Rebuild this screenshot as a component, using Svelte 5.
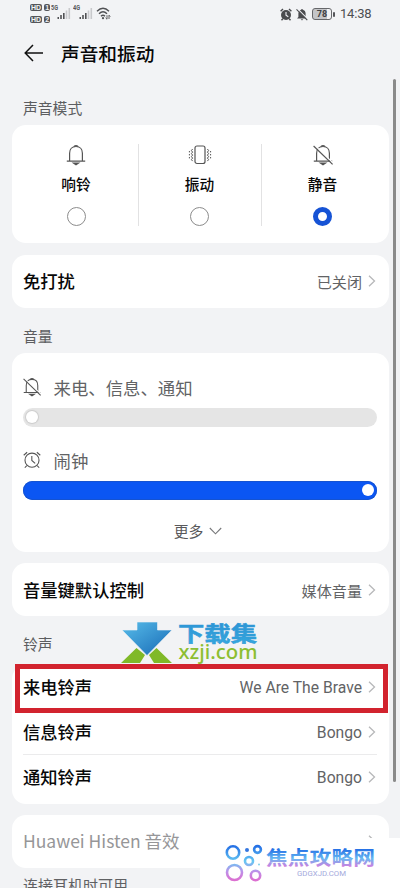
<script>
  let mode = $state('silent');

  const modes = [
    { id: 'ring', name: '响铃' },
    { id: 'vibrate', name: '振动' },
    { id: 'silent', name: '静音' }
  ];

  const volumes = [
    { id: 'silent', name: '来电、信息、通知', value: 0 },
    { id: 'alarm', name: '闹钟', value: 100 }
  ];

  const ringtones = [
    { name: '来电铃声', value: 'We Are The Brave', marked: true },
    { name: '信息铃声', value: 'Bongo' },
    { name: '通知铃声', value: 'Bongo' }
  ];
</script>

{#snippet chevron()}
  <svg class="chevron" width="8" height="12" viewBox="0 0 8 12">
    <path d="M1 .8 6.5 6 1 11.2" />
  </svg>
{/snippet}

{#snippet icon(id, size)}
  <svg class="icon" width={size} height={size} viewBox="0 0 20 20">
    {#if id === 'vibrate'}
      <rect x="5" y="1" width="10" height="17.5" rx="2" />
      <path class="waves" d="M2.6 4 1.4 5.6l1.2 1.5-1.2 1.5 1.200 1.500-1.200 1.500 1.200 1.500-1.200 1.500 1.200 1.500M17.400 4l1.200 1.600-1.200 1.500 1.200 1.500-1.200 1.500 1.200 1.500-1.200 1.500 1.200 1.500-1.200 1.500M-.6 6v1.400M-.6 9v1.400M-.6 12v1.400M20.600 6v1.400M20.600 9v1.400M20.600 12v1.400" />
    {:else if id === 'alarm'}
      <circle cx="10" cy="10.2" r="7.8" />
      <path d="M9.8 5.5v5l3.7 3.3M.8 4.7 4.6 1.4M15.4 1.4l3.8 3.3M4.2 16.2 2 18.6M15.8 16.2l2.2 2.4" />
    {:else}
      <path d="M.8 16.2h18.4M3.6 16.2V8.2C3.6 4.300 6 1.500 10 1.500s6.400 2.800 6.400 6.700v8" />
      <path d="M7.8 1.6Q10-.5 12.2 1.6" />
      <path class="clapper" d="M7.5 18h5L10 19.7z" />
      {#if id === 'silent'}
        <path class="gap" d="M1.7.3 20 18" />
        <path d="M.6 1 19.6 19.4" />
      {/if}
    {/if}
  </svg>
{/snippet}

{#snippet signal(label)}
  <svg width="21" height="15" viewBox="0 0 21 15">
    <text x="0" y="6" class="net" textLength="7" lengthAdjust="spacingAndGlyphs">{label}</text>
    <path class="dark" d="M6.500 13H8v2H6.500zM9.200 11h1.600v4H9.200zM12 9h1.600v6H12z" />
    <path class="pale" d="M14.700 6.500h1.600V15h-1.600zM17.500 4h1.600v11h-1.600z" />
  </svg>
{/snippet}

<div class="screen">
  <header class="status">
    <div class="hd">
      <span><b>HD</b><b>1</b></span>
      <span><b>HD</b><b>2</b></span>
    </div>
    {@render signal('5G')}
    {@render signal('4G')}
    <svg class="wifi" width="15" height="13" viewBox="0 0 15 13">
      <path d="M1 4.3Q7-1.7 13 4.3M3 6.8q4-4 8 0M5 9.2q2-2 4 0" />
      <circle cx="7" cy="11.2" r="1.1" />
      <path class="thin" d="M11 8.2v4l-1.4-1.4M13 12V8.2l1.3 1.4" />
    </svg>
    <div class="status-right">
      <svg width="12" height="13" viewBox="0 0 12 13">
        <circle cx="6" cy="7" r="5" fill="#4a4b4e" />
        <path d="M.6 3.3 3 1M9 1l2.4 2.3M2.8 10.8 1.5 12.3M9.2 10.8l1.3 1.5" stroke="#4a4b4e" stroke-width="1.4" />
        <path d="M6 4v3.2l2.3 1.6" fill="none" stroke="#f2f3f6" stroke-width="1.1" />
      </svg>
      <svg width="12" height="13" viewBox="0 0 12 13">
        <path d="M1 10.4 2.4 9V5Q3 2 5 1.7 6 .2 7 1.7 9.6 2.4 9.6 5v4l1.4 1.4zM4.7 11.3h2.6L6 12.5z" fill="#4a4b4e" />
        <path d="M1.3.7 12 11.4" stroke="#f2f3f6" stroke-width="1.2" />
        <path d="M.5 1.3 11.3 12.2" stroke="#4a4b4e" stroke-width="1.1" />
      </svg>
      <div class="battery"><span>78</span></div>
      <span class="clock">14:38</span>
    </div>
  </header>

  <div class="title-bar">
    <svg width="20" height="18" viewBox="0 0 20 18">
      <path d="M19 9H1.5M9 1 1.2 9 9 17" />
    </svg>
    <h1>声音和振动</h1>
  </div>

  <main>
    <h2 class="first">声音模式</h2>
    <section class="card modes">
      {#each modes as m}
        <button class="mode" onclick={() => (mode = m.id)}>
          {@render icon(m.id, 20)}
          <span class="mode-name">{m.name}</span>
          <span class="radio" class:checked={mode === m.id}></span>
        </button>
      {/each}
    </section>

    <section class="card row single">
      <span class="name">免打扰</span>
      <span class="value">已关闭</span>
      {@render chevron()}
    </section>

    <h2 class="volume-title">音量</h2>
    <section class="card volumes">
      {#each volumes as v}
        <div class="volume">
          <div class="volume-head">
            {@render icon(v.id, 18)}
            <span>{v.name}</span>
          </div>
          <div class="track" class:full={v.value === 100}>
            <span class="thumb"></span>
          </div>
        </div>
      {/each}
      <div class="more">
        <span>更多</span>
        <svg width="13" height="8" viewBox="0 0 13 8"><path d="M.8 1 6.5 6.8 12.2 1" /></svg>
      </div>
    </section>

    <section class="card row single">
      <span class="name">音量键默认控制</span>
      <span class="value">媒体音量</span>
      {@render chevron()}
    </section>

    <h2 class="ring-title">铃声</h2>
    <section class="card ringtones">
      {#each ringtones as r}
        <div class="row ringtone" class:marked={r.marked}>
          <span class="name">{r.name}</span>
          <span class="value latin">{r.value}</span>
          {@render chevron()}
        </div>
      {/each}
    </section>

    <section class="card row single disabled">
      <span class="name">Huawei Histen 音效</span>
      {@render chevron()}
    </section>
    <p class="hint">连接耳机时可用</p>
  </main>

  <div class="scrollbar"></div>

  <svg class="download-mark" width="140" height="44" viewBox="0 0 140 44">
    <defs>
      <linearGradient id="arrow" x1="0" y1="0" x2="1" y2="1">
        <stop offset="0" stop-color="#58bdea" />
        <stop offset="1" stop-color="#1769b5" />
      </linearGradient>
      <linearGradient id="word" x1="0" y1="0" x2="0" y2="1">
        <stop offset="0" stop-color="#2c8fd2" />
        <stop offset="1" stop-color="#35aadf" />
      </linearGradient>
    </defs>
    <path d="M0 43 15.5 28 24 35 19 43zM51 43 35.5 28 28 35 33 43z" fill="#80b928" />
    <path d="M16 2h20.500v8H51L26 35.500 1 10h15z" fill="url(#arrow)" stroke="#f2f3f5" stroke-width=".6" />
    <text class="mark-cn" x="57" y="20.500" textLength="79" lengthAdjust="spacingAndGlyphs" fill="url(#word)" stroke="#3199d7">下载集</text>
    <text class="mark-en" x="57.5" y="38.700" textLength="79" lengthAdjust="spacingAndGlyphs">xzji.com</text>
  </svg>

  <div class="site-mark">
    <svg width="200" height="50" viewBox="0 0 200 50">
      <defs>
        <linearGradient id="site" gradientUnits="userSpaceOnUse" x1="0" y1="8" x2="0" y2="42">
          <stop offset="0" stop-color="#246fe5" />
          <stop offset=".45" stop-color="#65c8f3" />
          <stop offset=".75" stop-color="#bc91e9" />
          <stop offset="1" stop-color="#dc70d1" />
        </linearGradient>
        <linearGradient id="site-word" gradientUnits="userSpaceOnUse" x1="0" y1="11" x2="0" y2="30">
          <stop offset="0" stop-color="#246fe5" />
          <stop offset=".5" stop-color="#68b8f2" />
          <stop offset="1" stop-color="#df75dc" />
        </linearGradient>
      </defs>
      <g fill="none" stroke="url(#site)" stroke-width="2.6">
        <circle cx="33" cy="14.5" r="6.2" />
        <circle cx="57.5" cy="11.5" r="3.4" />
        <circle cx="49" cy="23" r="4" />
        <circle cx="34.5" cy="34.5" r="7.5" />
        <circle cx="55.5" cy="37.5" r="4.7" />
      </g>
      <circle cx="47" cy="12" r="2" fill="#3577df" />
      <circle cx="59" cy="26.5" r="1" fill="#80cee9" />
      <text class="site-cn" x="66" y="27" textLength="109" lengthAdjust="spacingAndGlyphs" fill="url(#site-word)">焦点攻略网</text>
      <text class="site-en" x="97" y="37.5" textLength="49" lengthAdjust="spacingAndGlyphs">GDGXJD.COM</text>
    </svg>
  </div>
</div>

<style>
:global(body) {
  background: #f2f3f5;
}

.screen {
  position: relative;
  width: 400px;
  height: 888px;
  overflow: hidden;
  background: #f2f3f5;
  color: #080808;
  font-family: "Noto Sans CJK SC", sans-serif;
}

svg {
  display: block;
  flex: none;
}

.status {
  display: flex;
  height: 28px;
  box-sizing: border-box;
  padding: 3px 29px 0 30px;
}

.hd {
  display: flex;
  flex-direction: column;
  gap: 5px;
  width: 21px;
  padding-top: 1px;
}

.hd span {
  display: flex;
  gap: 2px;
}

.hd b {
  height: 7px;
  padding: 0 1px;
  border-radius: 2px;
  background: #55565a;
  color: #f2f3f5;
  font: bold 7px/7px "Liberation Sans", sans-serif;
}

.status > svg {
  margin-top: 1px;
  margin-right: 1px;
}

.status > .wifi {
  margin-top: 4px;
}

.net {
  overflow: visible;
  font: bold 7px Roboto, sans-serif;
  fill: #55565a;
}

.dark {
  fill: #505154;
}

.pale {
  fill: #c8c9cc;
}

.status .wifi {
  margin-left: 1px;
}

.wifi path {
  fill: none;
  stroke: #505154;
  stroke-width: 1.4;
}

.wifi circle {
  fill: #505154;
}

.wifi .thin {
  stroke-width: 0.9;
}

.status-right {
  display: flex;
  align-items: center;
  height: 22px;
  margin-left: auto;
  gap: 4px;
}

.battery {
  position: relative;
  width: 18px;
  height: 10px;
  margin-right: 4px;
  border: 1px solid #66676a;
  border-radius: 3px;
  background: linear-gradient(90deg, #c4c5c8 78%, #f2f3f5 78%);
  color: #414245;
  font: bold 9px/10px Roboto, sans-serif;
  text-align: center;
}

.battery::after {
  content: '';
  position: absolute;
  top: 3px;
  right: -4px;
  width: 2px;
  height: 5px;
  border-radius: 1px;
  background: #55565a;
}

.clock {
  width: 31px;
  color: #4d4e51;
  font: 13px/22px Roboto, sans-serif;
  letter-spacing: -0.2px;
}

.title-bar {
  display: flex;
  align-items: center;
  height: 52px;
  padding: 0 24px 2px;
  gap: 17px;
  box-sizing: border-box;
}

.title-bar path {
  fill: none;
  stroke: #111;
  stroke-width: 1.5;
}

h1 {
  margin: 0;
  font-size: 18.7px;
  font-weight: 500;
  line-height: 28px;
}

main {
  padding: 0 11px 0 12px;
}

h2 {
  margin: 0 11px;
  color: #5c5d60;
  font-size: 14.8px;
  font-weight: 400;
  line-height: 22px;
}

.first {
  padding: 17px 0 6px;
}

.card {
  border-radius: 14px;
  background: #fff;
}

.modes {
  display: grid;
  grid-template-columns: 1fr 1fr 1fr;
  height: 118px;
  box-sizing: border-box;
  padding: 19px 5px 18px 3px;
}

.mode {
  display: flex;
  flex-direction: column;
  align-items: center;
  padding: 1px 1px 0 0;
  border: 0;
  background: none;
  color: #080808;
  font-family: inherit;
}

.mode + .mode {
  border-left: 1px solid #e2e2e3;
}

.icon {
  overflow: visible;
  fill: none;
  stroke: #555;
  stroke-width: 1.2;
}

.waves {
  stroke-width: 1;
}

.clapper {
  fill: #555;
}

.gap {
  stroke: #fff;
}

.mode-name {
  margin-top: 8px;
  font-size: 14.7px;
  font-weight: 500;
  line-height: 22px;
}

.radio {
  width: 19px;
  height: 19px;
  margin-top: 12px;
  box-sizing: border-box;
  border: 1px solid #8c8c8c;
  border-radius: 50%;
}

.radio.checked {
  border: 5px solid #1653d5;
}

.row {
  display: flex;
  align-items: center;
  padding: 0 13px 0 11px;
}

.single {
  height: 53px;
  margin-top: 11.500px;
}

.name {
  flex: 1;
  font-size: 17.3px;
  font-weight: 500;
  line-height: 26px;
}

.value {
  margin-right: 6px;
  color: #626365;
  font-size: 15.1px;
  line-height: 22px;
}

.latin {
  padding-top: 1px;
  font-family: Roboto, sans-serif;
  font-size: 15.700px;
  font-weight: 400;
}

.chevron path {
  fill: none;
  stroke: #b7b8ba;
  stroke-width: 1.3;
}

.volume-title {
  padding: 17px 0 6px;
}

.volumes {
  height: 199px;
  box-sizing: border-box;
  padding: 21px 12px 0 11px;
}

.volume {
  height: 73px;
}

.volume-head {
  display: flex;
  align-items: center;
  gap: 12.5px;
  height: 27px;
  color: #626365;
  font-size: 17.4px;
}

.track {
  display: flex;
  align-items: center;
  height: 19px;
  margin-top: 7px;
  padding: 0 3px;
  box-sizing: border-box;
  border-radius: 10px;
  background: #e5e5e5;
}

.thumb {
  width: 12px;
  height: 12px;
  border-radius: 50%;
  background: #fff;
  box-shadow: 0 0 1px 1px #ccc;
}

.full {
  justify-content: flex-end;
  background: #0b56f3;
  box-shadow: inset 0 0 0 1px #1553d1;
}

.full .thumb {
  box-shadow: none;
}

.more {
  display: flex;
  align-items: center;
  justify-content: center;
  gap: 6px;
  padding-right: 4px;
  color: #59595b;
  font-size: 14.8px;
  line-height: 22px;
}

.more path {
  fill: none;
  stroke: #77787a;
  stroke-width: 1.1;
}

.ring-title {
  padding: 16.500px 0 10px;
}

.ringtones {
  height: 139px;
}

.ringtone {
  position: relative;
  height: 45px;
}

.ringtone:last-child::before {
  content: '';
  position: absolute;
  top: -1px;
  left: 11px;
  right: 12px;
  height: 1px;
  background: #ebebec;
}

.marked::after {
  content: '';
  position: absolute;
  top: -1px;
  left: 3px;
  right: 1px;
  height: 39px;
  border: 5px solid #d2232e;
}

.disabled {
  margin-top: 11px;
}

.disabled .name {
  color: #969698;
  font-size: 17.5px;
  font-weight: 400;
}

.hint {
  margin: 6px 11px 0;
  color: #606163;
  font-size: 15px;
  line-height: 22px;
  white-space: nowrap;
}

.scrollbar {
  position: absolute;
  top: 79px;
  left: 392.5px;
  width: 3.5px;
  height: 703px;
  border-radius: 2px;
  background: #8b8b8b;
}

.download-mark {
  position: absolute;
  top: 620px;
  left: 121px;
}

.mark-cn {
  font: bold 21px "Noto Sans CJK SC", sans-serif;
  stroke-width: 0.5;
}

.mark-en {
  font: 500 20px "Noto Sans", sans-serif;
  fill: #8cbe31;
}

.site-mark {
  position: absolute;
  left: 200px;
  top: 838px;
  background: #fff;
}

.site-cn {
  font: bold 19px "Noto Sans CJK SC", sans-serif;
}

.site-en {
  font: 7px Roboto, sans-serif;
  fill: #a3a9dc;
}
</style>
